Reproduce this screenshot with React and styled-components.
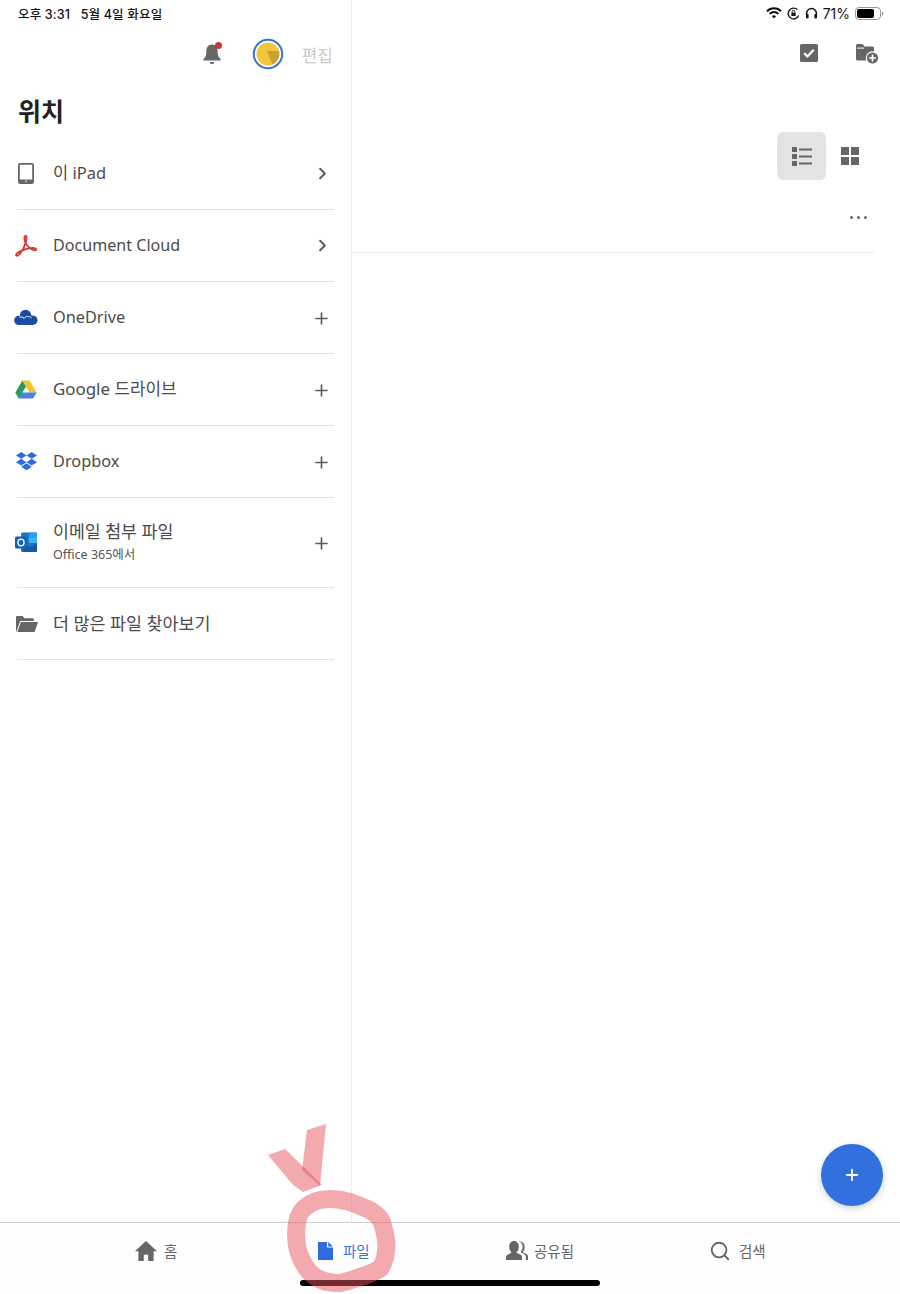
import styled, { createGlobalStyle } from "styled-components";
import { ChevronRight, Plus, Search } from "lucide-react";

const FONT = `"Noto Sans", "Noto Sans CJK KR", sans-serif`;
const SYSTEM = `"Inter", "Noto Sans CJK KR", sans-serif`;

const Global = createGlobalStyle`
  html, body { margin: 0; padding: 0; background: #fff; }
  body { font-family: ${FONT}; color: #444; }
`;

const Page = styled.div`
  width: 900px;
  height: 1294px;
  position: relative;
  overflow: hidden;
  display: flex;
  flex-direction: column;
  background: #fff;
`;

const Main = styled.div`
  flex: 1;
  display: flex;
  min-height: 0;
`;

const Side = styled.aside`
  width: 351px;
  border-right: 1px solid #eeeeee;
  display: flex;
  flex-direction: column;
`;

const Content = styled.section`
  flex: 1;
  display: flex;
  flex-direction: column;
`;

const StatusBar = styled.div`
  height: 26px;
  display: flex;
  align-items: center;
  justify-content: ${(p) => (p.$right ? "flex-end" : "flex-start")};
  padding: 0 16px 0 18px;
  font-family: ${SYSTEM};
  font-size: 12.5px;
  font-weight: 500;
  letter-spacing: 0.17px;
  color: #111;
  white-space: pre;
`;

const StatusIcons = styled.div`
  display: flex;
  align-items: center;
  gap: 5px;
  font-size: 14px;
  font-weight: 400;
  letter-spacing: 0;
`;

const Toolbar = styled.div`
  height: 56px;
  display: flex;
  align-items: center;
  justify-content: flex-end;
`;

const SideToolbar = styled(Toolbar)`
  padding-right: 18px;
`;

const ContentToolbar = styled(Toolbar)`
  padding: 0 22px 2px 0;
  box-sizing: border-box;
  gap: 38px;
`;

const EditLabel = styled.span`
  font-size: 17px;
  color: #c9c9c9;
  margin-left: 18px;
`;

const Bell = styled.div`
  position: relative;
  width: 20px;
  height: 24px;
  margin-right: 30px;
`;

const BellDot = styled.span`
  position: absolute;
  top: 0;
  right: 0;
  width: 7px;
  height: 7px;
  border-radius: 50%;
  background: #cc3333;
`;

const Title = styled.h1`
  margin: 0;
  height: 56px;
  padding-left: 18px;
  display: flex;
  align-items: center;
  font-size: 25px;
  font-weight: 700;
  color: #222;
`;

const List = styled.ul`
  list-style: none;
  margin: 0 17px;
  padding: 0;
`;

const Row = styled.li`
  height: ${(p) => p.$h || 71}px;
  border-bottom: 1px solid #e3e3e3;
  display: flex;
  align-items: center;
  color: #4b4b4b;
`;

const RowIcon = styled.span`
  width: 24px;
  height: 24px;
  margin-left: -3px;
  margin-right: 15px;
  display: flex;
  align-items: center;
  justify-content: center;
`;

const RowText = styled.div`
  flex: 1;
  display: flex;
  flex-direction: column;
  margin-bottom: 1px;
`;

const RowLabel = styled.span`
  font-size: ${(p) => p.$size}px;
  line-height: 22px;
`;

const RowSub = styled.span`
  font-size: 12.5px;
  line-height: 18px;
  margin-top: 3px;
  color: #555;
`;

const RowAction = styled.span`
  width: 24px;
  display: flex;
  justify-content: center;
  margin-right: ${(p) => (p.$plus ? 1 : 0)}px;
  padding-top: ${(p) => (p.$plus ? 1 : 0)}px;
  color: #5c5c5c;
`;

const ViewBar = styled.div`
  margin-top: 50px;
  height: 48px;
  padding-right: 41px;
  display: flex;
  align-items: center;
  justify-content: flex-end;
`;

const ViewButton = styled.div`
  width: 49px;
  height: 48px;
  border-radius: 6px;
  background: ${(p) => (p.$active ? "#e3e3e3" : "transparent")};
  display: flex;
  align-items: center;
  justify-content: center;
`;

const GridButton = styled(ViewButton)`
  width: 19px;
  margin-left: 14px;
`;

const FileRow = styled.div`
  height: 73px;
  width: 522px;
  border-bottom: 1px solid #e6e6e6;
  display: flex;
  align-items: center;
  justify-content: flex-end;
  padding: 2px 7px 0 0;
  box-sizing: border-box;
`;

const Dots = styled.div`
  display: flex;
  gap: 4px;
`;

const Dot = styled.i`
  width: 3px;
  height: 3px;
  border-radius: 50%;
  background: #666;
`;

const Fab = styled.button`
  position: absolute;
  left: 821px;
  top: 1144px;
  width: 62px;
  height: 62px;
  border: 0;
  border-radius: 50%;
  background: #3170dd;
  box-shadow: 0 2px 6px rgba(0, 0, 0, 0.2);
  color: #fff;
  display: flex;
  align-items: center;
  justify-content: center;
  padding: 0;
`;

const TabBar = styled.nav`
  height: 72px;
  box-sizing: border-box;
  border-top: 1px solid #d0d0d0;
  padding: 0 0 16px 135px;
  display: flex;
  align-items: center;
  background: #fefefe;
`;

const Tab = styled.div`
  width: ${(p) => p.$w}px;
  display: flex;
  align-items: center;
  gap: ${(p) => p.$gap}px;
  font-size: 14.5px;
  color: ${(p) => (p.$active ? "#3b74d6" : "#666")};
`;

const HomeIndicator = styled.div`
  position: absolute;
  left: 300px;
  top: 1280px;
  width: 300px;
  height: 6px;
  border-radius: 3px;
  background: #000;
`;

const Scribble = styled.svg`
  position: absolute;
  left: 0;
  top: 0;
  pointer-events: none;
  filter: blur(0.7px);
`;

const Wifi = () => (
  <svg width="16" height="12" viewBox="0 0 16 12" fill="none" stroke="#111" strokeWidth="2">
    <path d="M1 4.2a10 10 0 0 1 14 0" />
    <path d="M3.6 6.9a6.2 6.2 0 0 1 8.800 0" />
    <path d="M6 9.300a2.800 2.800 0 0 1 4 0L8 11.400z" fill="#111" stroke="none" />
  </svg>
);

const RotationLock = () => (
  <svg width="13" height="13" viewBox="0 0 13 13" fill="none">
    <path d="M11.600 8.600A5.400 5.400 0 1 1 10.300 2.600" stroke="#111" strokeWidth="1.400" />
    <rect x="4.400" y="5.600" width="4.200" height="3.400" fill="#111" />
    <path d="M5.200 5.600V4.600a1.300 1.300 0 0 1 2.600 0v1" stroke="#111" strokeWidth="1" />
  </svg>
);

const Headphones = () => (
  <svg width="13" height="12" viewBox="0 0 13 12" fill="none">
    <path d="M1.600 8V6.400a4.900 4.900 0 0 1 9.800 0V8" stroke="#111" strokeWidth="1.500" />
    <rect x="1" y="7" width="2.600" height="4.400" rx="1" fill="#111" />
    <rect x="9.400" y="7" width="2.600" height="4.400" rx="1" fill="#111" />
  </svg>
);

const Battery = () => (
  <svg width="29" height="13" viewBox="0 0 29 13" fill="none">
    <rect x="0.500" y="0.500" width="25" height="12" rx="3.500" stroke="#999" />
    <rect x="2" y="2" width="17" height="9" rx="2" fill="#000" />
    <path d="M27 4.600c1 .3 1.400 1 1.400 1.900s-.4 1.600-1.400 1.900z" fill="#999" />
  </svg>
);

const BellIcon = () => (
  <svg width="20" height="24" viewBox="0 0 20 24" fill="#666">
    <path d="M10 2.500c-3.600 0-5.600 2.800-5.600 6.400 0 4.400-1 6.200-3 8.100V18.500h17.200V17c-2-1.900-3-3.700-3-8.100 0-3.600-2-6.400-5.600-6.400z" />
    <path d="M7.800 20h4.400a2.200 2.200 0 0 1-4.400 0z" />
  </svg>
);

const Avatar = () => (
  <svg width="32" height="32" viewBox="0 0 32 32">
    <circle cx="16" cy="16" r="14.200" fill="#fff" stroke="#3b74cf" strokeWidth="2" />
    <circle cx="16" cy="16" r="11.500" fill="#f4c63d" />
    <path d="M15 13h12a11.500 11.500 0 0 1-6.500 13.600z" fill="#c5a233" />
  </svg>
);

const CheckBox = () => (
  <svg width="18" height="18" viewBox="0 0 18 18">
    <rect width="18" height="18" rx="1.500" fill="#666" />
    <path d="M4.200 9.200l3.300 3.200 6.200-6.600" fill="none" stroke="#fff" strokeWidth="2.200" />
  </svg>
);

const FolderPlus = () => (
  <svg width="22" height="21" viewBox="0 0 22 21">
    <path d="M0 2.500A1.500 1.500 0 0 1 1.500 1h5l2 2.500h8A1.500 1.500 0 0 1 18 5v11a1.500 1.500 0 0 1-1.500 1.500h-15A1.500 1.500 0 0 1 0 16z" fill="#666" />
    <rect x="1" y="4.600" width="7" height="1" fill="#fff" />
    <circle cx="16.500" cy="15" r="6.200" fill="#666" stroke="#fff" strokeWidth="1.200" />
    <path d="M16.500 11.600v6.800M13.100 15h6.800" stroke="#fff" strokeWidth="1.700" />
  </svg>
);

const ListIcon = () => (
  <svg width="20" height="19" viewBox="0 0 20 19" fill="#666">
    <rect x="0" y="0" width="5" height="5" />
    <rect x="0" y="7" width="5" height="5" />
    <rect x="0" y="14" width="5" height="5" />
    <rect x="7" y="1.500" width="13" height="2" />
    <rect x="7" y="8.500" width="13" height="2" />
    <rect x="7" y="15.500" width="13" height="2" />
  </svg>
);

const GridIcon = () => (
  <svg width="18" height="18" viewBox="0 0 18 18" fill="#666">
    <rect width="8" height="8" />
    <rect x="10" width="8" height="8" />
    <rect y="10" width="8" height="8" />
    <rect x="10" y="10" width="8" height="8" />
  </svg>
);

const TabletIcon = () => (
  <svg width="16" height="21" viewBox="0 0 16 21">
    <rect x="0.900" y="0.900" width="14.200" height="19.200" rx="1.400" fill="none" stroke="#666" strokeWidth="1.800" />
    <rect x="1" y="16.500" width="14" height="3.500" fill="#666" />
    <circle cx="8" cy="18.200" r="0.800" fill="#fff" />
  </svg>
);

const AcrobatIcon = () => (
  <svg width="24" height="24" viewBox="0 0 24 24" fill="none" stroke="#d2382b" strokeWidth="1.800">
    <path d="M2.400 21.600c-1.400-1.600 2.400-3.600 5.600-5 3.400-1.400 8-3 11.400-2.600 3.400.4 3.600 2.400 1.200 2.400-3.400 0-7.600-4.400-9.400-8.400-.9-2-1.400-5.800.2-6.200 1.600-.2 1.200 3.600.4 6.400-1 3.600-3 8-5.400 11-1.500 1.800-3 3.200-4 2.400z" />
  </svg>
);

const OneDriveIcon = () => (
  <svg width="25" height="17" viewBox="0 0 25 17">
    <g fill="#1c4aa6">
      <circle cx="12" cy="6.500" r="6" />
      <circle cx="5" cy="11.500" r="4.800" />
      <circle cx="19.500" cy="11.300" r="5" />
      <rect x="5" y="10" width="14.500" height="6.300" />
    </g>
    <path d="M5.500 8c2.500-.5 4 .3 5 1.500M10.500 9.500c1.500-2.500 5-3 8-.5" fill="none" stroke="#fff" strokeWidth="1" />
  </svg>
);

const DriveIcon = () => (
  <svg width="22" height="19" viewBox="0 0 22 19">
    <path d="M7.300 0.500h7.400l7 12h-7.400z" fill="#f4c531" />
    <path d="M7.300 0.500L0.300 12.800l3.500 5.700 7.200-12z" fill="#2f9a52" />
    <path d="M6.600 12.500h15.100l-3.500 6H3.800z" fill="#4b82e8" />
  </svg>
);

const DropboxIcon = () => (
  <svg width="21" height="19" viewBox="0 0 21 19" fill="#2e6ae6">
    <path d="M5.300 0L0 3.400l5.300 3.400 5.200-3.400z" />
    <path d="M15.700 0l-5.200 3.400 5.200 3.400L21 3.400z" />
    <path d="M0 10.200l5.300 3.400 5.200-3.400-5.200-3.400z" />
    <path d="M15.700 6.800l-5.200 3.400 5.200 3.400 5.300-3.400z" />
    <path d="M5.300 14.700l5.200 3.500 5.200-3.500-5.200-3.400z" />
  </svg>
);

const OutlookIcon = () => (
  <svg width="23" height="21" viewBox="0 0 23 21">
    <rect x="6" y="0.500" width="16" height="19.500" rx="1.500" fill="#1f74c9" />
    <rect x="14" y="0.500" width="8" height="5" fill="#2aa0e6" />
    <rect x="14" y="5.500" width="8" height="5.500" fill="#3fb4ee" />
    <path d="M8 11l7 4 7-4v8a1 1 0 0 1-1 1H8z" fill="#1558a8" />
    <rect x="0" y="4.500" width="12" height="12" rx="1.500" fill="#0f63b8" />
    <ellipse cx="6" cy="10.500" rx="3" ry="3.400" fill="none" stroke="#fff" strokeWidth="1.400" />
  </svg>
);

const FolderOpenIcon = () => (
  <svg width="23" height="18" viewBox="0 0 23 18" fill="#666">
    <path d="M1 17V2.300C1 1.500 1.500 1 2.300 1h5.200l2 2.200h8c.8 0 1.300.5 1.300 1.300V6H5.200L2 15z" />
    <path d="M5.900 7H23l-3.400 10H2.300z" />
  </svg>
);

const HomeIcon = () => (
  <svg width="22" height="20" viewBox="0 0 22 20" fill="#666">
    <path d="M11 0L0 10.200h3.400V20h5.400v-6.200h4.400V20h5.400v-9.800H22z" />
  </svg>
);

const FileIcon = () => (
  <svg width="15" height="18" viewBox="0 0 15 18" fill="#2f6bdc">
    <path d="M0 0h9v5.500h6V18H0z" />
    <path d="M10.200 0L15 4.400h-4.800z" />
  </svg>
);

const PeopleIcon = () => (
  <svg width="22" height="19" viewBox="0 0 22 19" fill="#666">
    <path d="M0 19v-3.200c0-2 4-3 5.600-4.200-1.600-1.600-2.400-3.600-2.400-6C3.200 2.200 5.200 0 8 0s4.800 2.200 4.800 5.600c0 2.400-.8 4.400-2.400 6 1.600 1.200 5.600 2.200 5.600 4.200V19z" />
    <path d="M12.600.6c2.600.4 4 2.400 4 5 0 2.400-.8 4.200-2 5.600 2 1.200 5.200 2 5.200 4.200V19H22v-3.600c0-2.600-3.600-3.200-5.200-4.200 1.400-1.600 1.800-3.600 1.800-5.600 0-3-2.200-5.400-6-5z" />
  </svg>
);

const locations = [
  { label: "이 iPad", size: 16.5, icon: <TabletIcon />, action: "chevron" },
  { label: "Document Cloud", size: 16.1, icon: <AcrobatIcon />, action: "chevron" },
  { label: "OneDrive", size: 16.3, icon: <OneDriveIcon />, action: "plus" },
  { label: "Google 드라이브", size: 16.9, icon: <DriveIcon />, action: "plus" },
  { label: "Dropbox", size: 16.3, icon: <DropboxIcon />, action: "plus" },
  { label: "이메일 첨부 파일", size: 17.3, sub: "Office 365에서", icon: <OutlookIcon />, action: "plus", h: 89 },
  { label: "더 많은 파일 찾아보기", size: 17.4, icon: <FolderOpenIcon /> },
];

const App = () => {
  return (
    <Page>
      <Global />
      <Main>
        <Side>
          <StatusBar>오후 3:31   5월 4일 화요일</StatusBar>
          <SideToolbar>
            <Bell>
              <BellIcon />
              <BellDot />
            </Bell>
            <Avatar />
            <EditLabel>편집</EditLabel>
          </SideToolbar>
          <Title>위치</Title>
          <List>
            {locations.map((item) => (
              <Row key={item.label} $h={item.h}>
                <RowIcon>{item.icon}</RowIcon>
                <RowText>
                  <RowLabel $size={item.size}>{item.label}</RowLabel>
                  {item.sub && <RowSub>{item.sub}</RowSub>}
                </RowText>
                <RowAction $plus={item.action === "plus"}>
                  {item.action === "chevron" && <ChevronRight size={19} strokeWidth={2.6} />}
                  {item.action === "plus" && <Plus size={19} strokeWidth={2.1} />}
                </RowAction>
              </Row>
            ))}
          </List>
        </Side>
        <Content>
          <StatusBar $right>
            <StatusIcons>
              <Wifi />
              <RotationLock />
              <Headphones />
              <span>71%</span>
              <Battery />
            </StatusIcons>
          </StatusBar>
          <ContentToolbar>
            <CheckBox />
            <FolderPlus />
          </ContentToolbar>
          <ViewBar>
            <ViewButton $active>
              <ListIcon />
            </ViewButton>
            <GridButton>
              <GridIcon />
            </GridButton>
          </ViewBar>
          <FileRow>
            <Dots>
              <Dot />
              <Dot />
              <Dot />
            </Dots>
          </FileRow>
        </Content>
      </Main>
      <TabBar>
        <Tab $w={183} $gap={7}>
          <HomeIcon />홈
        </Tab>
        <Tab $w={188} $gap={10} $active>
          <FileIcon />파일
        </Tab>
        <Tab $w={203} $gap={6}>
          <PeopleIcon />공유됨
        </Tab>
        <Tab $w={120} $gap={8}>
          <Search size={22} strokeWidth={2} color="#666" />검색
        </Tab>
      </TabBar>
      <Fab>
        <Plus size={18} strokeWidth={2.4} />
      </Fab>
      <HomeIndicator />
      <Scribble width="900" height="1294" viewBox="0 0 900 1294" fill="none">
        <path
          d="M307 1206C318 1197 336 1198 350 1202C362 1207 376 1210 382 1222C386 1236 390 1250 381 1268C368 1276 352 1280 340 1283C326 1284 312 1278 305 1266C296 1252 295 1236 297 1223C298 1216 302 1209 307 1206Z"
          stroke="#e85560"
          strokeOpacity="0.5"
          strokeWidth="18"
          strokeLinejoin="round"
        />
        <path d="M268 1155L285 1149L322 1185L303 1192L293 1185Z" fill="#e85560" fillOpacity="0.5" />
        <path d="M307 1130L326 1124L320 1186L302 1170Z" fill="#e85560" fillOpacity="0.5" />
      </Scribble>
    </Page>
  );
};

export default App;
